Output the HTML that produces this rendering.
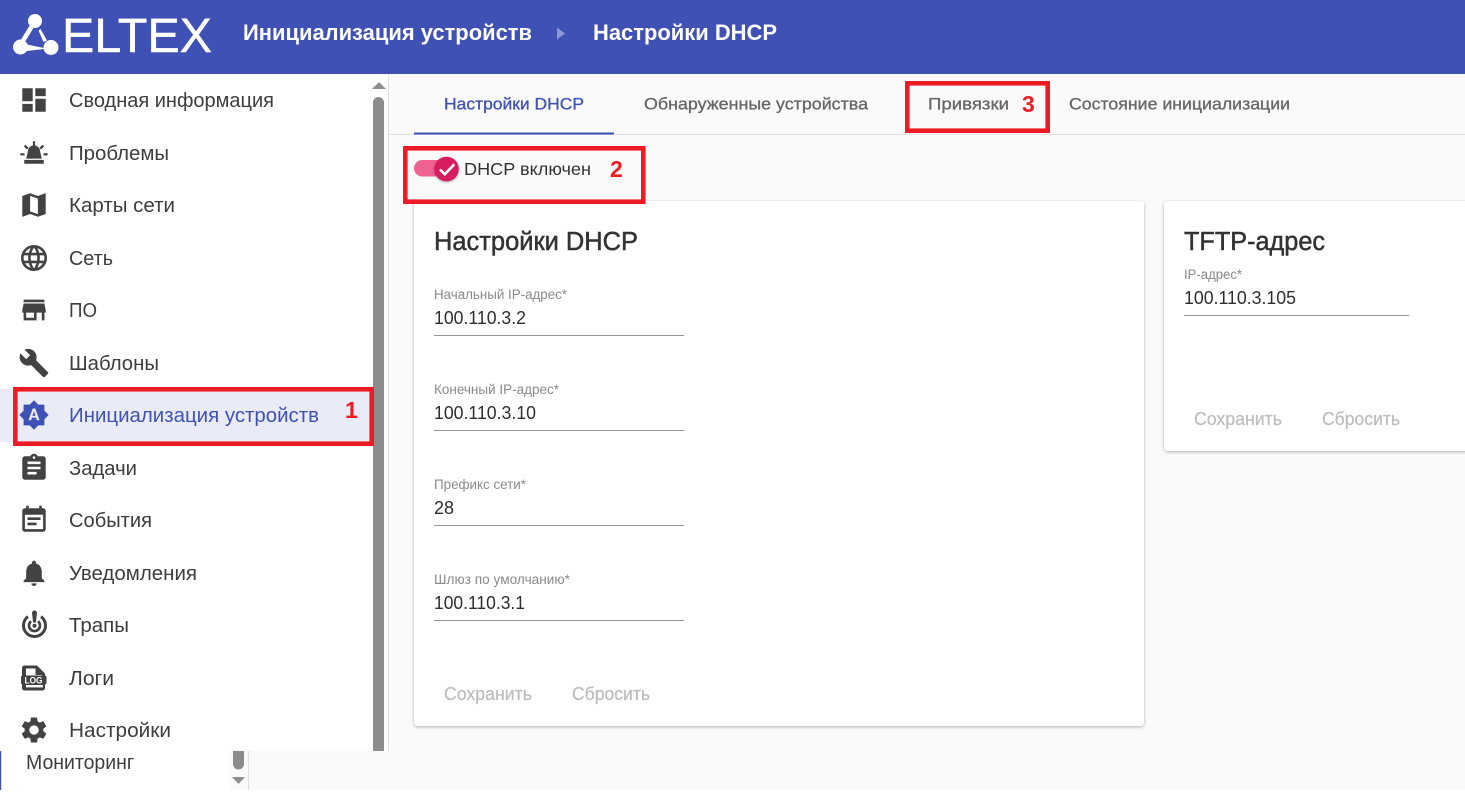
<!DOCTYPE html>
<html><head><meta charset="utf-8"><title>ELTEX</title>
<style>
html,body{margin:0;padding:0;background:#fff;width:1465px;height:803px;overflow:hidden}
svg{display:block}
text{font-family:"Liberation Sans",sans-serif;white-space:pre}
.m{font-size:20px;fill:#3d3d3d}
.t{font-size:17px;fill:#666;stroke:#666;stroke-width:.3}
.h{font-size:25.500px;fill:#333;stroke:#333;stroke-width:.5}
.l{font-size:13.500px;fill:#8a8a8a}
.v{font-size:18px;fill:#2e2e2e}
.b{font-size:18px;fill:#bdbdbd;stroke:#bdbdbd;stroke-width:.25}
.n{font-size:23px;font-weight:bold;fill:#ed1c24}
.i{fill:#424242}
</style></head><body>
<svg width="1465" height="803" viewBox="0 0 1465 803" xmlns="http://www.w3.org/2000/svg">
<defs>
<filter id="sh" x="-5%" y="-5%" width="110%" height="110%"><feDropShadow dx="0" dy="1" stdDeviation="1.6" flood-color="#000" flood-opacity=".3"/></filter>
<filter id="sh2" x="-30%" y="-30%" width="160%" height="160%"><feDropShadow dx="0" dy="1" stdDeviation="1" flood-color="#000" flood-opacity=".35"/></filter>
</defs>
<rect x="0" y="0" width="1465" height="803" fill="#fff"/>
<rect x="249" y="74" width="1216" height="716" fill="#fafafa"/>
<rect x="0" y="0" width="1465" height="74" fill="#3f51b5"/>

<!-- logo -->
<g fill="#fff">
<circle cx="35" cy="21" r="7"/><circle cx="20.500" cy="47" r="7.500"/><circle cx="51" cy="47.500" r="7.500"/>
<path d="M30 25 L33.500 28 L25.500 41 L21 39.500z"/>
<path d="M40.500 29 L47 40.500 L43.500 42 L38.500 30.500z"/>
<path d="M27 44.500 L44 48 L44 49 L27 51z"/>
</g>
<text x="62" y="52" font-size="48" fill="#fff" stroke="#fff" stroke-width=".4" textLength="150" lengthAdjust="spacingAndGlyphs">ELTEX</text>

<!-- breadcrumbs -->
<text x="243" y="40" font-size="22.500" font-weight="bold" fill="#fff" textLength="289" lengthAdjust="spacingAndGlyphs">Инициализация устройств</text>
<path d="M557 27.500 L565 33.500 L557 39.500z" fill="#8c98d4"/>
<text x="593" y="40" font-size="22.500" font-weight="bold" fill="#fff" textLength="184" lengthAdjust="spacingAndGlyphs">Настройки DHCP</text>

<!-- sidebar -->
<rect x="0" y="74" width="388" height="677" fill="#fff"/>
<rect x="388" y="74" width="1" height="677" fill="#e4e4e4"/>
<rect x="0" y="389" width="373" height="53" fill="#e9ebf6"/>

<text class="m" x="69" y="107" textLength="205" lengthAdjust="spacingAndGlyphs">Сводная информация</text>
<text class="m" x="69" y="160" textLength="100" lengthAdjust="spacingAndGlyphs">Проблемы</text>
<text class="m" x="69" y="212" textLength="106" lengthAdjust="spacingAndGlyphs">Карты сети</text>
<text class="m" x="69" y="265" textLength="44" lengthAdjust="spacingAndGlyphs">Сеть</text>
<text class="m" x="69" y="317" textLength="28" lengthAdjust="spacingAndGlyphs">ПО</text>
<text class="m" x="69" y="370" textLength="90" lengthAdjust="spacingAndGlyphs">Шаблоны</text>
<text class="m" x="69" y="422" textLength="250" lengthAdjust="spacingAndGlyphs" style="fill:#3f51b5">Инициализация устройств</text>
<text class="m" x="69" y="475" textLength="68" lengthAdjust="spacingAndGlyphs">Задачи</text>
<text class="m" x="69" y="527" textLength="83" lengthAdjust="spacingAndGlyphs">События</text>
<text class="m" x="69" y="580" textLength="128" lengthAdjust="spacingAndGlyphs">Уведомления</text>
<text class="m" x="69" y="632" textLength="60" lengthAdjust="spacingAndGlyphs">Трапы</text>
<text class="m" x="69" y="685" textLength="45" lengthAdjust="spacingAndGlyphs">Логи</text>
<text class="m" x="69" y="737" textLength="102" lengthAdjust="spacingAndGlyphs">Настройки</text>

<!-- icons -->
<g class="i">
<g transform="translate(18.400 84.400) scale(1.3)"><path d="M3 13h8V3H3v10zm0 8h8v-6H3v6zm10 0h8V11h-8v10zm0-18v6h8V3h-8z"/></g>
<g transform="translate(18.400 137.400) scale(1.3)">
<path d="M4.500 17.300h15v3h-15zM6 16.300l1.300-5.500a4.700 4.700 0 0 1 9.400 0l1.300 5.500z"/>
<path d="M12 3v3.600M1.500 13h3.200M19.300 13h3.200M4.800 6.300l2.400 2.400M19.200 6.300l-2.400 2.400" stroke="#424242" stroke-width="1.700" fill="none"/>
</g>
<g transform="translate(18.400 189.400) scale(1.3)"><path d="M20.500 3l-.16.03L15 5.100 9 3 3.360 4.900c-.21.070-.36.250-.36.480V20.500c0 .280.220.500.500.500l.160-.030L9 18.900l6 2.100 5.640-1.900c.210-.070.360-.250.360-.480V3.500c0-.280-.220-.500-.500-.500zM15 19l-6-2.110V5l6 2.110V19z"/></g>
<g transform="translate(18.400 242.400) scale(1.3)"><path d="M11.990 2C6.470 2 2 6.480 2 12s4.470 10 9.990 10C17.520 22 22 17.520 22 12S17.520 2 11.990 2zm6.930 6h-2.950c-.32-1.250-.78-2.450-1.380-3.560 1.840.63 3.370 1.910 4.330 3.560zM12 4.040c.83 1.200 1.480 2.530 1.910 3.960h-3.820c.43-1.430 1.080-2.760 1.910-3.960zM4.260 14C4.100 13.360 4 12.690 4 12s.1-1.360.26-2h3.380c-.08.66-.14 1.320-.14 2 0 .68.06 1.340.14 2H4.260zm.82 2h2.950c.32 1.250.78 2.450 1.380 3.560-1.840-.63-3.370-1.900-4.330-3.560zm2.950-8H5.080c.96-1.660 2.490-2.930 4.330-3.560C8.810 5.550 8.350 6.750 8.030 8zM12 19.960c-.83-1.200-1.480-2.530-1.910-3.960h3.820c-.43 1.430-1.080 2.760-1.910 3.960zM14.340 14H9.660c-.09-.66-.16-1.320-.16-2 0-.68.07-1.350.16-2h4.680c.09.65.16 1.320.16 2 0 .68-.07 1.340-.16 2zm.25 5.560c.6-1.110 1.060-2.310 1.380-3.560h2.950c-.96 1.650-2.490 2.930-4.330 3.560zM16.360 14c.08-.66.14-1.320.14-2 0-.68-.06-1.340-.14-2h3.380c.16.64.26 1.310.26 2s-.1 1.360-.26 2h-3.380z"/></g>
<g transform="translate(18.400 294.400) scale(1.3)"><path d="M20 4H4v2h16V4zm1 10v-2l-1-5H4l-1 5v2h1v6h10v-6h4v6h2v-6h1zm-9 4H6v-4h6v4z"/></g>
<g transform="translate(18.400 347.400) scale(1.3)"><path d="M22.700 19l-9.100-9.100c.9-2.300.4-5-1.500-6.900-2-2-5-2.400-7.400-1.300L9 6 6 9 1.600 4.700C.4 7.100.9 10.100 2.900 12.100c1.900 1.900 4.600 2.400 6.900 1.500l9.100 9.100c.4.400 1 .4 1.400 0l2.300-2.300c.5-.4.5-1.100.1-1.400z"/></g>
<g transform="translate(18.400 399.400) scale(1.3)" style="fill:#3f51b5"><path d="M10.850 12.650h2.300L12 9l-1.150 3.650zM20 8.690V4h-4.690L12 .69 8.690 4H4v4.690L.69 12 4 15.310V20h4.690L12 23.310 15.310 20H20v-4.690L23.310 12 20 8.690zM14.300 16l-.7-2h-3.200l-.7 2H7.800L11 7h2l3.200 9h-1.900z"/></g>
<g transform="translate(18.400 452.400) scale(1.3)"><path d="M19 3h-4.180C14.400 1.840 13.300 1 12 1c-1.300 0-2.400.84-2.820 2H5c-1.100 0-2 .9-2 2v14c0 1.100.9 2 2 2h14c1.100 0 2-.9 2-2V5c0-1.100-.9-2-2-2zm-7 0c.55 0 1 .45 1 1s-.45 1-1 1-1-.45-1-1 .45-1 1-1zm2 14H7v-2h7v2zm3-4H7v-2h10v2zm0-4H7V7h10v2z"/></g>
<g transform="translate(18.400 504.400) scale(1.3)"><path d="M17 10H7v2h10v-2zm2-7h-1V1h-2v2H8V1H6v2H5c-1.110 0-1.990.9-1.990 2L3 19c0 1.100.89 2 2 2h14c1.100 0 2-.9 2-2V5c0-1.100-.9-2-2-2zm0 16H5V8h14v11zm-5-5H7v2h7v-2z"/></g>
<g transform="translate(18.400 557.400) scale(1.3)"><path d="M12 22c1.100 0 2-.9 2-2h-4c0 1.100.89 2 2 2zm6-6v-5c0-3.070-1.640-5.640-4.500-6.320V4c0-.83-.67-1.500-1.500-1.500s-1.500.67-1.500 1.500v.68C7.630 5.360 6 7.920 6 11v5l-2 2v1h16v-1l-2-2z"/></g>
<!-- traps -->
<path d="M28 616.600a11 11 0 1 0 13 0" fill="none" stroke="#424242" stroke-width="3"/>
<path d="M31 621.300a5.500 5.500 0 1 0 7 0" fill="none" stroke="#424242" stroke-width="2.600"/>
<circle cx="34.500" cy="625.800" r="2"/>
<path d="M32 613a2.500 2.500 0 0 1 5 0l-1.100 9.500h-2.800z"/>
<!-- logs -->
<path d="M25 665.500h12l8 8v14.500a2.500 2.500 0 0 1-2.500 2.500h-18a2.500 2.500 0 0 1-2.500-2.500v-20a2.500 2.500 0 0 1 2.500-2.500z"/>
<path d="M26 668.500h9.500v6.500H42v1H26z" fill="#fff"/>
<rect x="26" y="685" width="17" height="2.400" fill="#fff"/>
<rect x="21" y="675.500" width="25.500" height="9" rx="2" fill="#424242"/>
<text x="24.500" y="683.600" font-size="9.500" font-weight="bold" fill="#fff" textLength="18" lengthAdjust="spacingAndGlyphs">LOG</text>
<g transform="translate(18.400 714.400) scale(1.3)"><path d="M19.140 12.940c.04-.3.06-.61.06-.94 0-.32-.02-.64-.07-.94l2.030-1.580c.18-.14.23-.41.12-.61l-1.920-3.320c-.12-.22-.37-.29-.59-.22l-2.390.96c-.5-.38-1.030-.7-1.620-.94l-.36-2.540c-.04-.24-.24-.41-.48-.41h-3.840c-.24 0-.43.17-.47.41l-.36 2.540c-.59.24-1.130.57-1.620.94l-2.390-.96c-.22-.08-.47 0-.59.22L2.740 8.870c-.12.21-.08.47.12.61l2.030 1.580c-.05.3-.09.63-.09.94s.02.64.07.94l-2.030 1.580c-.18.14-.23.41-.12.61l1.920 3.320c.12.22.37.29.59.22l2.390-.96c.5.38 1.030.7 1.620.94l.36 2.540c.05.24.24.41.48.41h3.840c.24 0 .44-.17.47-.41l.36-2.540c.59-.24 1.130-.56 1.620-.94l2.390.96c.22.08.47 0 .59-.22l1.920-3.320c.12-.22.07-.47-.12-.61l-2.010-1.580zM12 15.600c-1.980 0-3.600-1.620-3.600-3.600s1.620-3.600 3.600-3.600 3.600 1.620 3.600 3.600-1.620 3.600-3.600 3.600z"/></g>
</g>

<!-- sidebar scrollbar -->
<path d="M372 89 L379 82 L386 89z" fill="#8f8f8f"/>
<path d="M373 751V102.500a5.500 5.500 0 0 1 11 0V751z" fill="#8c8c8c"/>

<!-- lower strip -->
<rect x="0" y="751" width="1.200" height="39" fill="#3f51b5"/>
<text class="m" x="26" y="769" textLength="108" lengthAdjust="spacingAndGlyphs">Мониторинг</text>
<rect x="229" y="751" width="19" height="39" fill="#fafafa"/>
<rect x="248" y="751" width="1" height="39" fill="#e0e0e0"/>
<path d="M233 751h11v13a5.500 5.500 0 0 1-11 0z" fill="#8c8c8c"/>
<path d="M232 777h13l-6.500 7z" fill="#8f8f8f"/>

<!-- tabs -->
<rect x="389" y="134" width="1076" height="1" fill="#e0e0e0"/>
<rect x="414" y="132.500" width="200" height="2" fill="#3f51b5"/>
<text class="t" x="444" y="109.500" textLength="140" lengthAdjust="spacingAndGlyphs" style="fill:#3f51b5;stroke:#3f51b5">Настройки DHCP</text>
<text class="t" x="644" y="109.500" textLength="224" lengthAdjust="spacingAndGlyphs">Обнаруженные устройства</text>
<text class="t" x="928" y="109.500" textLength="81" lengthAdjust="spacingAndGlyphs">Привязки</text>
<text class="t" x="1069" y="109.500" textLength="221" lengthAdjust="spacingAndGlyphs">Состояние инициализации</text>

<!-- switch -->
<rect x="414" y="160" width="36" height="16.500" rx="8.250" fill="#f06292"/>
<circle cx="446.500" cy="169" r="12.300" fill="#d81b60" filter="url(#sh2)"/>
<path d="M440 169.500l4.800 4.800 9.500-10" fill="none" stroke="#fff" stroke-width="2.600"/>
<text x="464" y="175" font-size="17.500" fill="#333" textLength="127" lengthAdjust="spacingAndGlyphs">DHCP включен</text>

<!-- card 1 -->
<rect x="414" y="201" width="730" height="525" rx="4" fill="#fff" filter="url(#sh)"/>
<text class="h" x="434" y="250" textLength="204" lengthAdjust="spacingAndGlyphs">Настройки DHCP</text>
<text class="l" x="434" y="299" textLength="133" lengthAdjust="spacingAndGlyphs">Начальный IP-адрес*</text>
<text class="v" x="434" y="324" textLength="92" lengthAdjust="spacingAndGlyphs">100.110.3.2</text>
<rect x="434" y="335" width="250" height="1" fill="#949494"/>
<text class="l" x="434" y="394" textLength="125" lengthAdjust="spacingAndGlyphs">Конечный IP-адрес*</text>
<text class="v" x="434" y="419" textLength="102" lengthAdjust="spacingAndGlyphs">100.110.3.10</text>
<rect x="434" y="430" width="250" height="1" fill="#949494"/>
<text class="l" x="434" y="489" textLength="92" lengthAdjust="spacingAndGlyphs">Префикс сети*</text>
<text class="v" x="434" y="514" textLength="20" lengthAdjust="spacingAndGlyphs">28</text>
<rect x="434" y="525" width="250" height="1" fill="#949494"/>
<text class="l" x="434" y="584" textLength="136" lengthAdjust="spacingAndGlyphs">Шлюз по умолчанию*</text>
<text class="v" x="434" y="609" textLength="91" lengthAdjust="spacingAndGlyphs">100.110.3.1</text>
<rect x="434" y="620" width="250" height="1" fill="#949494"/>
<text class="b" x="444" y="700" textLength="88" lengthAdjust="spacingAndGlyphs">Сохранить</text>
<text class="b" x="572" y="700" textLength="78" lengthAdjust="spacingAndGlyphs">Сбросить</text>

<!-- card 2 -->
<rect x="1164" y="201" width="320" height="250" rx="4" fill="#fff" filter="url(#sh)"/>
<text class="h" x="1184" y="250" textLength="141" lengthAdjust="spacingAndGlyphs">TFTP-адрес</text>
<text class="l" x="1184" y="279" textLength="58" lengthAdjust="spacingAndGlyphs">IP-адрес*</text>
<text class="v" x="1184" y="304" textLength="112" lengthAdjust="spacingAndGlyphs">100.110.3.105</text>
<rect x="1184" y="315" width="225" height="1" fill="#949494"/>
<text class="b" x="1194" y="425" textLength="88" lengthAdjust="spacingAndGlyphs">Сохранить</text>
<text class="b" x="1322" y="425" textLength="78" lengthAdjust="spacingAndGlyphs">Сбросить</text>

<!-- annotations -->
<g fill="none" stroke="#ed1c24" stroke-width="4.600">
<rect x="15.300" y="389.300" width="356.400" height="54.400"/>
<rect x="405.300" y="148.300" width="238" height="53.400"/>
<rect x="907.300" y="83.300" width="140.400" height="47.400"/>
</g>
<text class="n" x="345" y="418">1</text>
<text class="n" x="610" y="177">2</text>
<text class="n" x="1022" y="112">3</text>
</svg>
</body></html>
